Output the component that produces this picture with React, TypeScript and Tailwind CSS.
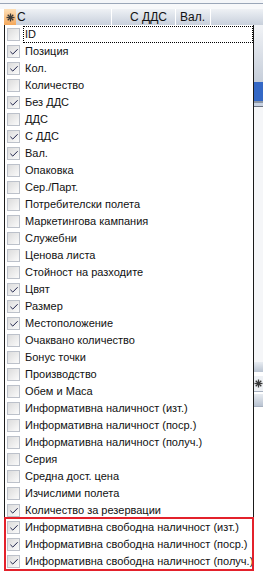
import { Check } from "lucide-react";

type Item = { label: string; checked: boolean };

const items: Item[] = [
  { label: "ID", checked: false },
  { label: "Позиция", checked: true },
  { label: "Кол.", checked: true },
  { label: "Количество", checked: false },
  { label: "Без ДДС", checked: true },
  { label: "ДДС", checked: false },
  { label: "С ДДС", checked: true },
  { label: "Вал.", checked: true },
  { label: "Опаковка", checked: false },
  { label: "Сер./Парт.", checked: false },
  { label: "Потребителски полета", checked: false },
  { label: "Маркетингова кампания", checked: false },
  { label: "Служебни", checked: false },
  { label: "Ценова листа", checked: false },
  { label: "Стойност на разходите", checked: false },
  { label: "Цвят", checked: true },
  { label: "Размер", checked: true },
  { label: "Местоположение", checked: true },
  { label: "Очаквано количество", checked: false },
  { label: "Бонус точки", checked: false },
  { label: "Производство", checked: false },
  { label: "Обем и Маса", checked: false },
  { label: "Информативна наличност (изт.)", checked: false },
  { label: "Информативна наличност (поср.)", checked: false },
  { label: "Информативна наличност (получ.)", checked: false },
  { label: "Серия", checked: false },
  { label: "Средна дост. цена", checked: false },
  { label: "Изчислими полета", checked: false },
  { label: "Количество за резервации", checked: true },
];

const highlighted: Item[] = [
  { label: "Информативна свободна наличност (изт.)", checked: true },
  { label: "Информативна свободна наличност (поср.)", checked: true },
  { label: "Информативна свободна наличност (получ.)", checked: true },
];

function Asterisk({ className = "" }: { className?: string }) {
  return (
    <svg width="9" height="9" viewBox="0 0 9 9" className={className}>
      <g stroke="#3a3a3a" strokeWidth="1.3">
        <line x1="4.5" y1="0.5" x2="4.5" y2="8.5" />
        <line x1="0.5" y1="4.5" x2="8.5" y2="4.5" />
        <line x1="1.7" y1="1.7" x2="7.3" y2="7.3" />
        <line x1="7.3" y1="1.7" x2="1.7" y2="7.3" />
      </g>
    </svg>
  );
}

function Row({ item, focused }: { item: Item; focused?: boolean }) {
  return (
    <div className="flex h-[17px] items-center">
      <div className="ml-[2px] flex h-[13px] w-[13px] shrink-0 items-center justify-center border border-[#bcc1ca] bg-gradient-to-br from-[#dcdcdc] to-[#fbfbfb]">
        {item.checked && <Check size={10} strokeWidth={2.4} className="text-[#1c2048]" />}
      </div>
      <div
        className={
          "ml-[3px] flex h-[17px] flex-1 items-center pl-[1px] " +
          (focused ? "border border-dotted border-black" : "border border-transparent")
        }
      >
        <span className="whitespace-nowrap text-[11px] leading-none text-[#111]">{item.label}</span>
      </div>
    </div>
  );
}

export default function App() {
  return (
    <div
      className="relative h-[581px] w-[263px] overflow-hidden bg-white"
      style={{ fontFamily: '"Liberation Sans", Arial, sans-serif' }}
    >
      {/* grid behind the chooser */}
      <div className="h-[3px] bg-[#f4f6f9]" />
      <div className="h-[1px] bg-[#9aa6b8]" />
      <div className="h-[5px] bg-[#f7f8fa]" />
      <div className="flex h-[16px] bg-gradient-to-b from-[#eef1f5] to-[#c8d0dc] text-[12px] text-[#111]">
        <div className="w-[4px] bg-white" />
        <div className="flex w-[12px] items-center justify-center bg-gradient-to-b from-[#fde0b8] to-[#f4a85a]">
          <Asterisk />
        </div>
        <div className="flex w-[96px] items-center border-r border-white pl-[1px]">С</div>
        <div className="flex w-[64px] items-center justify-end border-r border-white pr-[8px]">С ДДС</div>
        <div className="flex w-[35px] items-center border-r border-white pl-[4px]">Вал.</div>
        <div className="flex-1" />
      </div>
      <div className="ml-auto flex w-[10px] flex-col">
        <div className="h-[57px] bg-gradient-to-b from-[#f1f3f6] to-[#c6ceda]" />
        <div className="h-[19px] bg-[#3468c6]" />
        <div className="h-[2px] bg-[#8b95a5]" />
        <div className="h-[3px] bg-[#c8d2e2]" />
        <div className="h-[1px] bg-[#6a7280]" />
        <div className="h-[255px] bg-[#f5f6f8]" />
        <div className="h-[10px] bg-gradient-to-b from-[#e8ecf1] to-[#b9c3d1]" />
        <div className="h-[4px] bg-white" />
        <div className="flex h-[15px] items-center bg-[#eef1f5]">
          <Asterisk className="ml-[1px]" />
        </div>
        <div className="h-[1px] bg-[#a7b1c0]" />
        <div className="h-[2px] bg-white" />
        <div className="h-[12px] bg-gradient-to-b from-[#e8ecf1] to-[#b9c3d1]" />
        <div className="h-[1px] bg-[#a7b1c0]" />
      </div>

      {/* column chooser dropdown */}
      <div className="absolute left-[4px] top-[25px] w-[250px] border-l border-r border-b border-[#1a1a1a] bg-white pt-[1px]">
        {items.map((it, i) => (
          <Row key={it.label} item={it} focused={i === 0} />
        ))}
        <div className="relative">
          {highlighted.map((it) => (
            <Row key={it.label} item={it} />
          ))}
          <div className="pointer-events-none absolute -left-[1px] -right-[1px] -top-[2px] -bottom-[1px] border-2 border-[#e3212b]" />
        </div>
      </div>
    </div>
  );
}
